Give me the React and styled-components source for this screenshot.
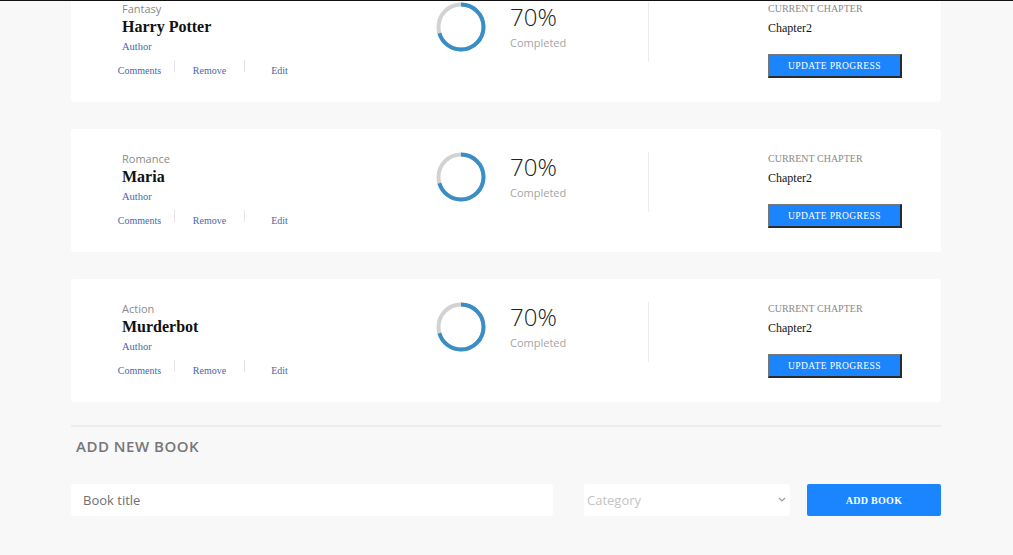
import React from 'react';
import styled, { createGlobalStyle } from 'styled-components';

const GlobalStyle = createGlobalStyle`
  html, body {
    margin: 0;
    padding: 0;
    background: #f8f8f8;
  }
  body {
    font-family: "Liberation Serif", serif;
  }
`;

const Page = styled.div`
  border-top: 1px solid #111;
  height: 554px;
  overflow: hidden;
`;

const Container = styled.div`
  width: 870px;
  margin: 0 0 0 71px;
`;

const BookList = styled.div`
  display: flex;
  flex-direction: column;
  gap: 27px;
  margin-top: -22px;
`;

const Card = styled.div`
  height: 123px;
  box-sizing: border-box;
  background: #fff;
  border-radius: 3px;
  display: flex;
  align-items: flex-start;
  padding: 23px 0 0 51px;
`;

const Info = styled.div`
  width: 314px;
  display: flex;
  flex-direction: column;
`;

const Genre = styled.div`
  font-family: "Open Sans", sans-serif;
  font-size: 11px;
  line-height: 14px;
  color: #8a8a8a;
`;

const Title = styled.div`
  font-family: "Liberation Serif", serif;
  font-weight: bold;
  font-size: 16px;
  line-height: 19px;
  color: #111;
  margin-top: 1px;
`;

const Author = styled.div`
  font-size: 10.5px;
  line-height: 13px;
  color: #4a67a8;
  margin-top: 4px;
`;

const Links = styled.div`
  display: flex;
  margin: 7px 0 0 -17px;
`;

const LinkItem = styled.a`
  width: 69px;
  text-align: center;
  font-size: 10px;
  line-height: 13px;
  color: #4a67a8;
  margin-top: 4px;
  cursor: pointer;
`;

const LinkSep = styled.span`
  width: 1px;
  height: 12px;
  background: #e4e4e4;
`;

const Progress = styled.div`
  display: flex;
  gap: 24px;
  width: 212px;
`;

const Ring = styled.svg`
  flex: none;
  display: block;
`;

const Stats = styled.div`
  display: flex;
  flex-direction: column;
  font-family: "Open Sans", sans-serif;
`;

const Percent = styled.div`
  font-size: 24px;
  font-weight: 300;
  line-height: 30px;
  color: #222;
`;

const Completed = styled.div`
  font-size: 11px;
  line-height: 14px;
  color: #a5a5a5;
  margin-top: 4px;
`;

const Divider = styled.div`
  width: 1px;
  height: 60px;
  background: #ececec;
`;

const Chapter = styled.div`
  margin-left: 119px;
  display: flex;
  flex-direction: column;
`;

const ChapterLabel = styled.div`
  font-size: 10px;
  line-height: 12px;
  color: #8a8a8a;
  text-transform: uppercase;
  margin-top: 1px;
`;

const ChapterName = styled.div`
  font-size: 12px;
  line-height: 14px;
  color: #111;
  margin-top: 6px;
`;

const UpdateButton = styled.button`
  width: 134px;
  height: 24px;
  margin-top: 19px;
  padding: 0;
  background: #1a85ff;
  color: #fff;
  font-family: "Liberation Serif", serif;
  font-size: 9.5px;
  letter-spacing: 0.4px;
  text-transform: uppercase;
  border: 1px solid;
  border-width: 1px 2px 2px 1px;
  border-color: #777 #2a2a2a #2a2a2a #777;
  box-sizing: border-box;
  cursor: pointer;
`;

const AddSection = styled.div`
  margin-top: 23px;
  border-top: 2px solid #ececec;
`;

const AddHeading = styled.h3`
  margin: 0;
  padding: 9px 0 0 5px;
  font-family: "Open Sans", sans-serif;
  font-size: 15px;
  font-weight: 600;
  line-height: 20px;
  color: #777;
  letter-spacing: 0.5px;
  text-transform: uppercase;
`;

const AddForm = styled.div`
  display: flex;
  align-items: center;
  margin-top: 28px;
`;

const TitleInput = styled.input`
  width: 482px;
  height: 32px;
  box-sizing: border-box;
  border: none;
  border-radius: 3px;
  background: #fff;
  padding: 0 12px;
  font-family: "Open Sans", sans-serif;
  font-size: 13px;
  color: #444;
  outline: none;
  &::placeholder {
    color: #707070;
  }
`;

const SelectWrap = styled.div`
  position: relative;
  margin-left: 31px;
  width: 206px;
  height: 32px;
`;

const Select = styled.select`
  width: 100%;
  height: 100%;
  appearance: none;
  border: none;
  border-radius: 3px;
  background: #fff;
  padding: 0 3px;
  font-family: "Open Sans", sans-serif;
  font-size: 13px;
  color: #c4c4c4;
  outline: none;
`;

const Chevron = styled.svg`
  position: absolute;
  right: 4px;
  top: 13px;
  pointer-events: none;
`;

const AddButton = styled.button`
  margin-left: 17px;
  width: 134px;
  height: 32px;
  border: none;
  border-radius: 2px;
  background: #1a85ff;
  color: #fff;
  font-family: "Liberation Serif", serif;
  font-weight: bold;
  font-size: 10px;
  letter-spacing: 0.3px;
  cursor: pointer;
`;

const books = [
  { genre: 'Fantasy', title: 'Harry Potter', percent: 70, chapter: 'Chapter2' },
  { genre: 'Romance', title: 'Maria', percent: 70, chapter: 'Chapter2' },
  { genre: 'Action', title: 'Murderbot', percent: 70, chapter: 'Chapter2' },
];

const ProgressRing = ({ percent }) => {
  const r = 22.5;
  const c = 2 * Math.PI * r;
  return (
    <Ring width="50" height="50" viewBox="0 0 50 50">
      <circle cx="25" cy="25" r={r} fill="none" stroke="#d2d2d2" strokeWidth="4" />
      <circle
        cx="25"
        cy="25"
        r={r}
        fill="none"
        stroke="#3a8ec6"
        strokeWidth="4"
        strokeDasharray={`${(c * percent) / 100} ${c}`}
        transform="rotate(-90 25 25)"
      />
    </Ring>
  );
};

const BookCard = ({ genre, title, percent, chapter }) => (
  <Card>
    <Info>
      <Genre>{genre}</Genre>
      <Title>{title}</Title>
      <Author>Author</Author>
      <Links>
        <LinkItem>Comments</LinkItem>
        <LinkSep />
        <LinkItem>Remove</LinkItem>
        <LinkSep />
        <LinkItem>Edit</LinkItem>
      </Links>
    </Info>
    <Progress>
      <ProgressRing percent={percent} />
      <Stats>
        <Percent>{percent}%</Percent>
        <Completed>Completed</Completed>
      </Stats>
    </Progress>
    <Divider />
    <Chapter>
      <ChapterLabel>Current Chapter</ChapterLabel>
      <ChapterName>{chapter}</ChapterName>
      <UpdateButton>Update progress</UpdateButton>
    </Chapter>
  </Card>
);

const App = () => (
  <Page>
    <GlobalStyle />
    <Container>
      <BookList>
        {books.map((b) => (
          <BookCard key={b.title} {...b} />
        ))}
      </BookList>
      <AddSection>
        <AddHeading>Add new book</AddHeading>
        <AddForm>
          <TitleInput placeholder="Book title" />
          <SelectWrap>
            <Select defaultValue="">
              <option value="" disabled>
                Category
              </option>
              <option>Action</option>
              <option>Fantasy</option>
              <option>Romance</option>
            </Select>
            <Chevron width="8" height="5" viewBox="0 0 8 5">
              <path d="M1 1l3 3 3-3" fill="none" stroke="#999" strokeWidth="1.2" />
            </Chevron>
          </SelectWrap>
          <AddButton>ADD BOOK</AddButton>
        </AddForm>
      </AddSection>
    </Container>
  </Page>
);

export default App;
